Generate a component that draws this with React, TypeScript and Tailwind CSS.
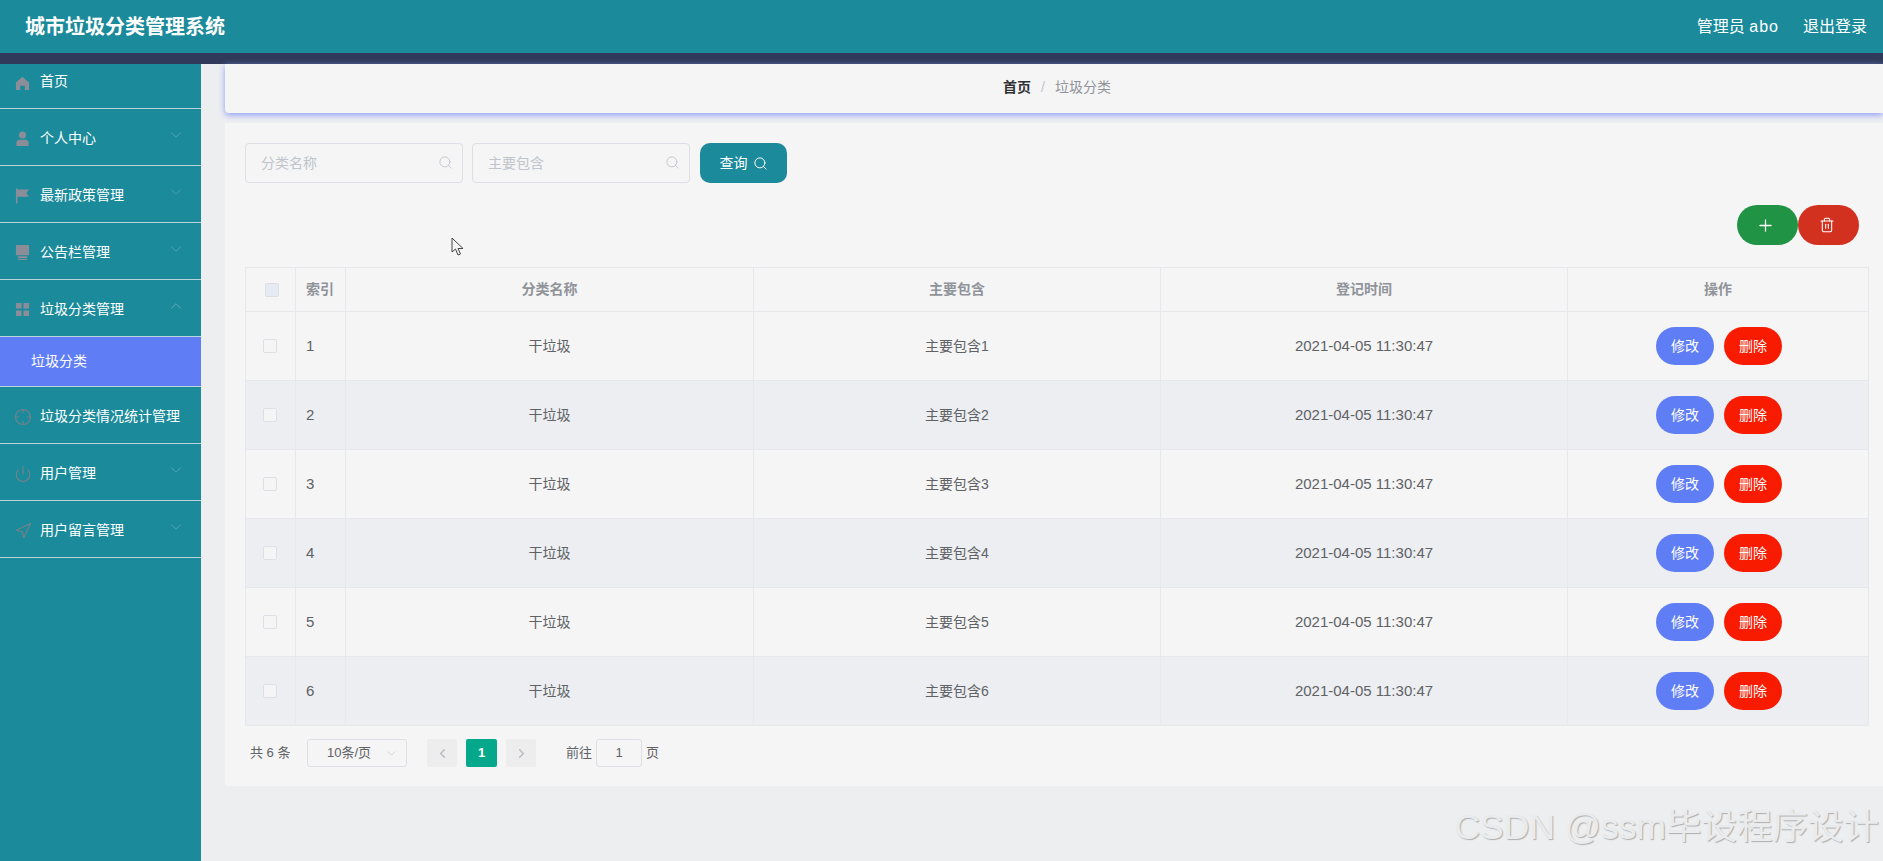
import React from 'react';
import { ChevronDown, ChevronUp, ChevronLeft, ChevronRight, Search, Plus, Trash2, Power, Navigation, Crosshair } from 'lucide-react';

const HomeIcon = () => (
  <svg viewBox="0 0 16 16" className="h-[15px] w-[15px]" fill="#8b8d99">
    <path d="M8 .8 15 7v8h-4.5v-4.5h-5V15H1V7z" />
  </svg>
);
const UserIcon = () => (
  <svg viewBox="0 0 16 16" className="h-[15px] w-[15px]" fill="#8b8d99">
    <circle cx="8" cy="4.2" r="3.8" />
    <path d="M1.5 16v-3.2C1.5 10.6 3 9.4 5 9.4h6c2 0 3.500 1.200 3.500 3.400V16z" />
  </svg>
);
const FlagIcon = () => (
  <svg viewBox="0 0 16 16" className="h-[16px] w-[15px]" fill="#8b8d99">
    <path d="M1 0h1.500v16H1zM2.500 1H15l-3 3.800 3 4H2.500z" />
  </svg>
);
const PlatformIcon = () => (
  <svg viewBox="0 0 16 16" className="h-[15px] w-[15px]" fill="#8b8d99">
    <path d="M1.500 0h13a.5.5 0 0 1 .5.5V11H1V.5a.5.5 0 0 1 .5-.5zM3 12h10v2H3z" />
    <path d="M3 15h10v1H3z" />
  </svg>
);
const GridIcon = () => (
  <svg viewBox="0 0 16 16" className="h-[15px] w-[15px]" fill="#8b8d99">
    <rect x="1" y="1" width="6" height="6" rx="0.6" />
    <rect x="9" y="1" width="6" height="6" rx="0.6" />
    <rect x="1" y="9" width="6" height="6" rx="0.6" />
    <rect x="9" y="9" width="6" height="6" rx="0.6" />
  </svg>
);

const iconStroke = '-ml-[1px] h-[18px] w-[18px] text-[#76828b]';

type MenuItem = { label: string; icon: React.ReactNode; arrow?: 'down' | 'up' };

const menu: MenuItem[] = [
  { label: '个人中心', icon: <UserIcon />, arrow: 'down' },
  { label: '最新政策管理', icon: <FlagIcon />, arrow: 'down' },
  { label: '公告栏管理', icon: <PlatformIcon />, arrow: 'down' },
  { label: '垃圾分类管理', icon: <GridIcon />, arrow: 'up' },
];
const menuBottom: MenuItem[] = [
  { label: '垃圾分类情况统计管理', icon: <Crosshair className={iconStroke} strokeWidth={1.5} /> },
  { label: '用户管理', icon: <Power className={iconStroke} strokeWidth={1.5} />, arrow: 'down' },
  { label: '用户留言管理', icon: <Navigation className={iconStroke} strokeWidth={1.5} />, arrow: 'down' },
];

const MenuRow = ({ item }: { item: MenuItem }) => (
  <div className="flex h-[57px] items-center border-b border-[#b9d6da] pl-[15px] pr-[20px] pt-[3px] text-[14px] text-white">
    <span className="flex w-[25px] shrink-0 items-center">{item.icon}</span>
    <span className="flex-1 whitespace-nowrap">{item.label}</span>
    {item.arrow === 'down' && <ChevronDown className="mb-[7px] -mr-[4px] h-[18px] w-[18px] text-[#5fa9b3]" strokeWidth={1.1} />}
    {item.arrow === 'up' && <ChevronUp className="mb-[7px] -mr-[4px] h-[18px] w-[18px] text-[#6fb3bc]" strokeWidth={1.1} />}
  </div>
);

const Sidebar = () => (
  <aside className="h-full w-[201px] shrink-0 bg-[#1b8a9a]">
    <div className="flex h-[45px] items-start border-b border-[#b9d6da] pl-[15px] pt-[7px] text-[14px] text-white">
      <span className="flex h-[20px] w-[25px] items-center pt-[4px]"><HomeIcon /></span>
      <span>首页</span>
    </div>
    {menu.map((m) => <MenuRow key={m.label} item={m} />)}
    <div className="flex h-[50px] items-center border-b border-[#b9d6da] bg-[#5f7ef5] pl-[31px] text-[14px] text-white">
      垃圾分类
    </div>
    {menuBottom.map((m) => <MenuRow key={m.label} item={m} />)}
  </aside>
);

const SearchInput = ({ placeholder }: { placeholder: string }) => (
  <div className="flex h-[40px] w-[218px] items-center rounded-[4px] border border-[#dcdfe6] pl-[15px] pr-[9px] text-[14px] text-[#c0c4cc]">
    <span className="flex-1">{placeholder}</span>
    <Search className="mb-[2px] h-[15px] w-[15px] text-[#c0c4cc]" strokeWidth={1.5} />
  </div>
);

const rows = [1, 2, 3, 4, 5, 6];
const thClass = 'border border-[#e6e8ec] text-center text-[14px] font-bold text-[#909399]';
const tdClass = 'border border-[#e6e8ec] text-center text-[14px] text-[#606266]';

const DataTable = () => (
  <table className="w-[1623px] table-fixed border-collapse">
    <colgroup>
      <col className="w-[50px]" />
      <col className="w-[50px]" />
      <col className="w-[408px]" />
      <col className="w-[407px]" />
      <col className="w-[407px]" />
      <col className="w-[301px]" />
    </colgroup>
    <thead>
      <tr className="h-[44px]">
        <th className={thClass}>
          <span className="ml-[2px] inline-block h-[14px] w-[14px] rounded-[2px] border border-[#dcdfe6] bg-[#e6eaf2] align-middle" />
        </th>
        <th className={`${thClass} pl-[10px] text-left`}>索引</th>
        <th className={thClass}>分类名称</th>
        <th className={thClass}>主要包含</th>
        <th className={thClass}>登记时间</th>
        <th className={thClass}>操作</th>
      </tr>
    </thead>
    <tbody>
      {rows.map((n) => (
        <tr key={n} className={`h-[69px] ${n % 2 === 0 ? 'bg-[#eceef1]' : ''}`}>
          <td className={tdClass}>
            <span className="mb-[2px] mr-[2px] inline-block h-[14px] w-[14px] rounded-[2px] border border-[#dcdfe6] bg-[#f5f5f5] align-middle" />
          </td>
          <td className={`${tdClass} pl-[10px] text-left text-[15px]`}>{n}</td>
          <td className={tdClass}>干垃圾</td>
          <td className={tdClass}>主要包含{n}</td>
          <td className={`${tdClass} text-[15px]`}>2021-04-05 11:30:47</td>
          <td className={tdClass}>
            <div className="flex items-center justify-center gap-[10px] pl-[2px]">
              <button className="h-[38px] w-[58px] rounded-[19px] bg-[#5f7ef5] text-[14px] text-white">修改</button>
              <button className="h-[38px] w-[58px] rounded-[19px] bg-[#f81b00] text-[14px] text-white">删除</button>
            </div>
          </td>
        </tr>
      ))}
    </tbody>
  </table>
);

const Pagination = () => (
  <div className="ml-[5px] mt-[13px] flex items-center text-[13px] text-[#606266]">
    <span className="w-[57px]">共 6 条</span>
    <div className="flex h-[28px] w-[100px] items-center rounded-[3px] border border-[#dcdfe6] pl-[19px] pr-[8px]">
      <span className="flex-1">10条/页</span>
      <ChevronDown className="h-[13px] w-[13px] text-[#c0c4cc]" strokeWidth={1.3} />
    </div>
    <span className="ml-[20px] flex h-[28px] w-[30px] items-center justify-center rounded-[2px] bg-[#ededed] text-[#b8bbc2]">
      <ChevronLeft className="h-[15px] w-[15px]" strokeWidth={2.4} />
    </span>
    <span className="ml-[9px] flex h-[28px] w-[31px] items-center justify-center rounded-[2px] bg-[#05a88b] font-bold text-white">1</span>
    <span className="ml-[9px] flex h-[28px] w-[30px] items-center justify-center rounded-[2px] bg-[#ededed] text-[#b8bbc2]">
      <ChevronRight className="h-[15px] w-[15px]" strokeWidth={2.4} />
    </span>
    <span className="ml-[30px]">前往</span>
    <span className="ml-[4px] flex h-[28px] w-[46px] items-center justify-center rounded-[3px] border border-[#dcdfe6]">1</span>
    <span className="ml-[4px]">页</span>
  </div>
);

export default function App() {
  return (
    <div className="relative flex h-[861px] flex-col overflow-hidden bg-[#edeef0] font-['Liberation_Sans','Noto_Sans_CJK_SC',sans-serif]">
      <header className="flex h-[53px] shrink-0 items-center justify-between bg-[#1b8a9a] pl-[25px] pr-[16px] text-white">
        <h1 className="text-[20px] font-bold">城市垃圾分类管理系统</h1>
        <div className="flex gap-[24px] text-[16px]">
          <span>管理员 <span className="tracking-[1px]">abo</span></span>
          <span>退出登录</span>
        </div>
      </header>
      <div className="h-[11px] shrink-0 bg-[#30395a]" />
      <div className="flex min-h-0 flex-1">
        <Sidebar />
        <main className="flex-1 pl-[24px]">
          <div className="flex h-[49px] items-center justify-center rounded-bl-[4px] bg-[#f5f5f5] pb-[2px] pl-[6px] text-[14px] shadow-[0_2px_6px_#8e9cf7]">
            <span className="font-bold text-[#303133]">首页</span>
            <span className="mx-[10px] text-[#c0c4cc]">/</span>
            <span className="text-[#909399]">垃圾分类</span>
          </div>
          <section className="mt-[10px] h-[663px] bg-[#f5f5f5] pl-[20px] pt-[20px]">
            <div className="flex gap-[9px]">
              <SearchInput placeholder="分类名称" />
              <SearchInput placeholder="主要包含" />
              <button className="ml-[1px] flex h-[40px] w-[87px] items-center justify-center gap-[5px] rounded-[10px] bg-[#1b8a9a] text-[14px] text-white">
                查询
                <Search className="h-[15px] w-[15px]" strokeWidth={1.6} />
              </button>
            </div>
            <div className="mt-[22px] flex justify-end pr-[24px]">
              <button className="flex h-[40px] w-[61px] items-center justify-center rounded-[20px] bg-[#219344] pr-[4px] text-white">
                <Plus className="h-[19px] w-[19px]" strokeWidth={1.6} />
              </button>
              <button className="flex h-[40px] w-[61px] items-center justify-center rounded-[20px] bg-[#d33120] pr-[4px] text-white">
                <Trash2 className="h-[16px] w-[16px]" strokeWidth={1.6} />
              </button>
            </div>
            <div className="mt-[22px]">
              <DataTable />
              <Pagination />
            </div>
          </section>
        </main>
      </div>
      {/* mouse pointer left in the capture */}
      <svg viewBox="0 0 14 20" className="absolute left-[451px] top-[237px] h-[20px] w-[14px]" fill="#f5f5f5" stroke="#444" strokeWidth="1">
        <path d="M1 1v14l3.500-3 2.500 6 2.500-1-2.500-5.500H12z" />
      </svg>
      {/* CSDN watermark */}
      <div className="absolute right-[4px] top-[805px] whitespace-nowrap text-[35.5px] leading-[44px] text-[#eaebed] [text-shadow:1px_1px_1px_#adadad]">
        CSDN @ssm毕设程序设计
      </div>
    </div>
  );
}
